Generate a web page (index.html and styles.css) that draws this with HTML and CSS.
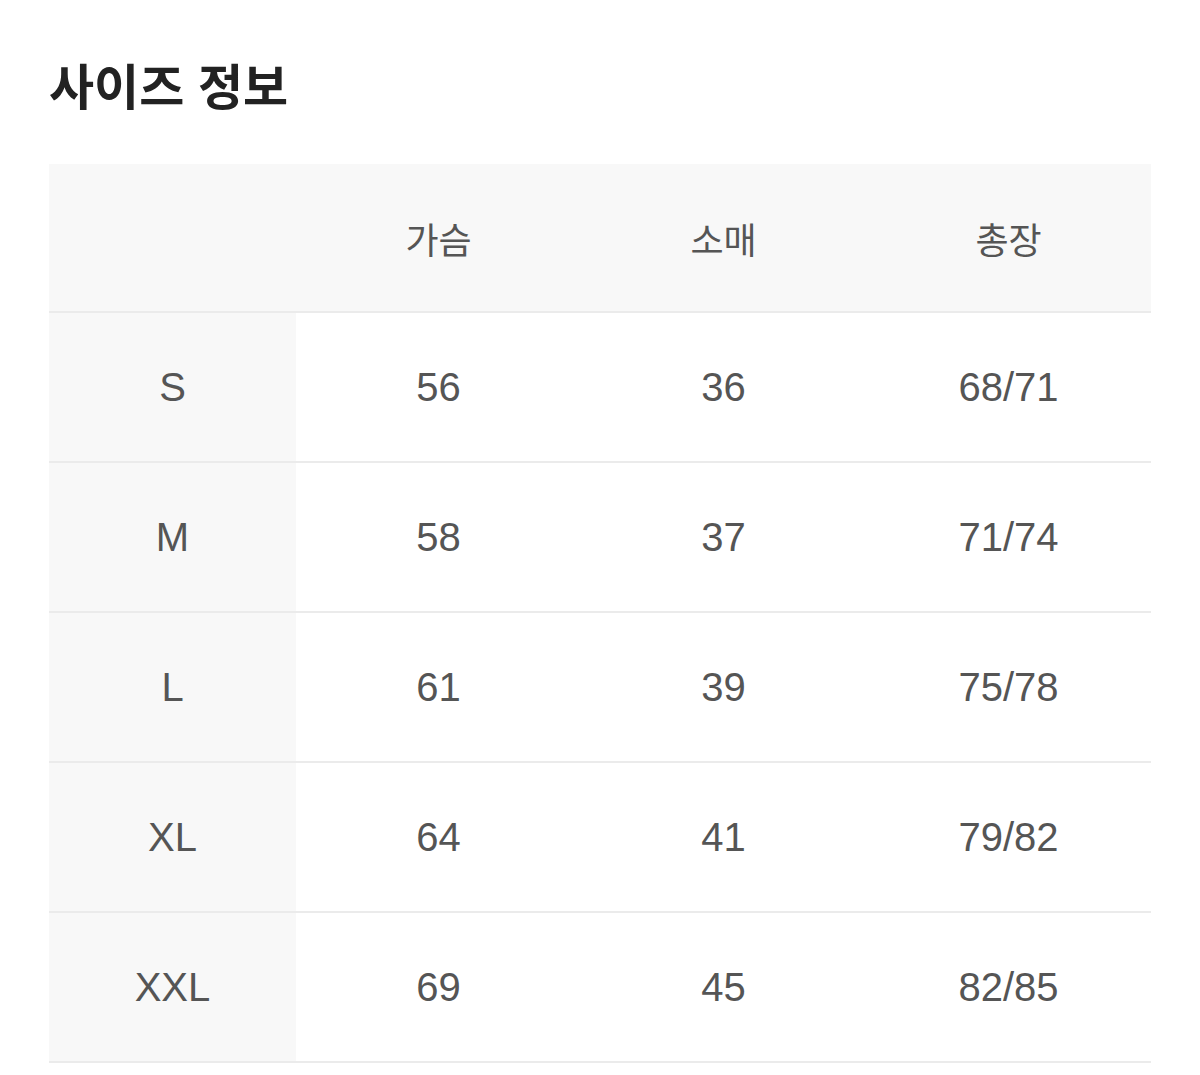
FILE: index.html
```html
<!DOCTYPE html>
<html lang="ko">
<head>
<meta charset="utf-8">
<link rel="stylesheet" href="styles.css">
</head>
<body>
<main class="page">
  <h1 class="title">사이즈 정보</h1>
  <table class="size-table">
    <thead>
      <tr><th class="label"></th><th>가슴</th><th>소매</th><th>총장</th></tr>
    </thead>
    <tbody>
      <tr><th class="label">S</th><td>56</td><td>36</td><td>68/71</td></tr>
      <tr><th class="label">M</th><td>58</td><td>37</td><td>71/74</td></tr>
      <tr><th class="label">L</th><td>61</td><td>39</td><td>75/78</td></tr>
      <tr><th class="label">XL</th><td>64</td><td>41</td><td>79/82</td></tr>
      <tr><th class="label">XXL</th><td>69</td><td>45</td><td>82/85</td></tr>
    </tbody>
  </table>
</main>
</body>
</html>
```

FILE: styles.css
```css
html, body {
  margin: 0;
  padding: 0;
  background: #fff;
}
body {
  font-family: "Liberation Sans", "Noto Sans CJK KR", sans-serif;
}
.page {
  padding: 48px 49px 0 49px;
}
.title {
  margin: 0;
  font-family: "Noto Sans CJK KR", sans-serif;
  font-size: 49px;
  font-weight: 700;
  color: #222;
  line-height: 72px;
}
.size-table {
  margin-top: 44px;
  width: 1102px;
  border-collapse: collapse;
  table-layout: fixed;
  font-family: "Liberation Sans", "Noto Sans CJK KR", sans-serif;
  color: #555;
}
.size-table th, .size-table td {
  font-weight: 400;
  font-size: 40px;
  text-align: center;
  padding: 0;
  height: 148px;
  border-bottom: 2px solid #ebebeb;
}
.size-table thead th {
  background: #f8f8f8;
  height: 147px;
  font-family: "Noto Sans CJK KR", sans-serif;
  font-size: 36px;
}
.size-table .label {
  width: 247px;
  background: #f8f8f8;
}
```
